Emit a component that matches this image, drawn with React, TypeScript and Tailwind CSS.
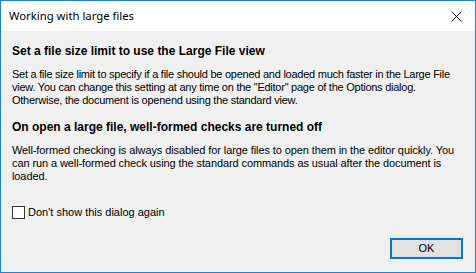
export default function App() {
  return (
    <div className="w-[476px] h-[273px] border border-[#1883d7] bg-[#f0f0f0] flex flex-col overflow-hidden" style={{ fontFamily: '"Liberation Sans", Arial, sans-serif' }}>
      <div className="h-[30px] bg-white flex items-center justify-between pl-[8px] pr-[10px] shrink-0">
        <span className="text-[11.3px] text-black" style={{ fontFamily: '"Noto Sans", "Open Sans", sans-serif' }}>Working with large files</span>
        <svg width="11" height="11" viewBox="0 0 11 11" className="mr-[3px]">
          <path d="M0.5 0.5 L10.5 10.5 M10.5 0.5 L0.5 10.5" stroke="#000" strokeWidth="1" />
        </svg>
      </div>
      <div className="flex-1 flex flex-col pl-[11px] pr-[5px] pt-[13px] text-[11px] leading-[13px] text-black">
        <h2 className="font-bold text-[12px] leading-[14px]">Set a file size limit to use the Large File view</h2>
        <p className="mt-[10px] tracking-[-0.25px] whitespace-nowrap">
          Set a file size limit to specify if a file should be opened and loaded much faster in the Large File
          <br />
          view. You can change this setting at any time on the "Editor" page of the Options dialog.
          <br />
          Otherwise, the document is openend using the standard view.
        </p>
        <h2 className="font-bold text-[12px] leading-[14px] mt-[13px]">On open a large file, well-formed checks are turned off</h2>
        <p className="mt-[10px] tracking-[-0.1px] whitespace-nowrap">
          Well-formed checking is always disabled for large files to open them in the editor quickly. You
          <br />
          can run a well-formed check using the standard commands as usual after the document is
          <br />
          loaded.
        </p>
        <label className="flex items-center gap-[3px] mt-[23px]">
          <span className="w-[13px] h-[13px] border border-[#333] bg-white" />
          <span>Don't show this dialog again</span>
        </label>
        <div className="flex justify-end mt-auto mb-[13px] mr-[7px]">
          <button className="w-[73px] h-[21px] border-2 border-[#0078d7] bg-[#e1e1e1] text-[11px]">OK</button>
        </div>
      </div>
    </div>
  );
}
